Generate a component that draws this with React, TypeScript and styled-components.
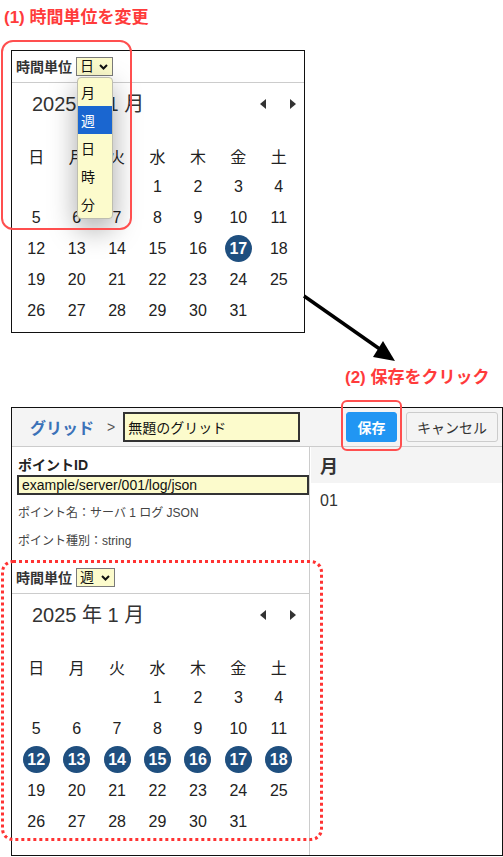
import React from "react";
import styled, { createGlobalStyle } from "styled-components";

const GlobalStyle = createGlobalStyle`
  html, body { margin: 0; padding: 0; background: #fff; }
  body { font-family: "Liberation Sans", "Noto Sans CJK JP", Arial, sans-serif; color: #222; }
  * { box-sizing: border-box; }
`;

const Page = styled.div`
  position: relative;
  width: 503px;
  height: 857px;
  overflow: hidden;
  display: flex;
  flex-direction: column;
`;

const StepLabel = styled.div<{ $ml: number; $mt: number }>`
  margin: ${(p) => p.$mt}px 0 0 ${(p) => p.$ml}px;
  font-size: 17px;
  font-weight: bold;
  color: #ff3b3b;
  line-height: 18px;
  height: 18px;
  white-space: nowrap;
`;

const TopCard = styled.div`
  margin: 23px 0 0 11px;
  width: 294px;
  height: 283px;
  border: 1px solid #111;
  background: #fff;
`;

const BottomCard = styled.div`
  margin: 20px 0 0 11px;
  width: 492px;
  height: 449px;
  border: 1px solid #111;
  display: flex;
  flex-direction: column;
  background: #fff;
`;

/* ---------- calendar ---------- */
const UnitHeader = styled.div`
  height: 32px;
  border-bottom: 1px solid #ccc;
  display: flex;
  align-items: center;
  padding-left: 4px;
`;

const UnitLabel = styled.span`
  font-size: 14px;
  font-weight: bold;
  color: #333;
  line-height: 18px;
`;

const SelectWrap = styled.div`
  position: relative;
  margin-left: 4px;
`;

const SelectBox = styled.div<{ $w: number }>`
  width: ${(p) => p.$w}px;
  height: 19px;
  border: 1px solid #7a7a7a;
  background: #fcfbcc;
  display: flex;
  align-items: center;
  justify-content: space-between;
  padding: 0 4px 0 3px;
  font-size: 14px;
  color: #111;
  line-height: 17px;
`;

const DropList = styled.div`
  position: absolute;
  top: 20px;
  left: 1px;
  width: 36px;
  background: #fcfbcc;
  border: 1px solid #bdbdb0;
  border-radius: 4px;
  box-shadow: 0 10px 28px rgba(0, 0, 0, 0.35);
  z-index: 5;
  overflow: hidden;
`;

const DropItem = styled.div<{ $active?: boolean }>`
  height: 28px;
  display: flex;
  align-items: center;
  padding-left: 3px;
  font-size: 14px;
  color: ${(p) => (p.$active ? "#fff" : "#111")};
  background: ${(p) => (p.$active ? "#1a66d0" : "transparent")};
`;

const TitleRow = styled.div`
  width: 291px;
  margin-top: 6px;
  height: 30px;
  display: flex;
  align-items: center;
  justify-content: space-between;
  padding: 0 7px 0 20px;
`;

const MonthTitle = styled.span`
  font-size: 20px;
  color: #333;
  line-height: 30px;
`;

const NavGroup = styled.div`
  display: flex;
  align-items: center;
  gap: 24px;
`;

const Grid = styled.div`
  width: 283px;
  margin: 21px 0 0 4px;
  display: grid;
  grid-template-columns: repeat(7, 1fr);
`;

const Cell = styled.div`
  height: 31px;
  display: flex;
  align-items: center;
  justify-content: center;
  font-size: 16px;
  color: #222;
`;

const Dot = styled.span`
  width: 27px;
  height: 27px;
  border-radius: 50%;
  background: #1f4f7f;
  color: #fff;
  font-weight: bold;
  display: flex;
  align-items: center;
  justify-content: center;
  font-size: 16px;
`;

const Chevron = () => (
  <svg width="9" height="6" viewBox="0 0 9 6">
    <polyline points="1,1 4.5,4.5 8,1" fill="none" stroke="#111" strokeWidth="2" />
  </svg>
);

const NavArrow = ({ dir }: { dir: "l" | "r" }) => (
  <svg width="6" height="10" viewBox="0 0 6 10">
    {dir === "l" ? <polygon points="6,0 6,10 0,5" fill="#333" /> : <polygon points="0,0 0,10 6,5" fill="#333" />}
  </svg>
);

const WEEK = ["日", "月", "火", "水", "木", "金", "土"];

function Calendar({
  unit,
  selectW,
  selected,
  open,
}: {
  unit: string;
  selectW: number;
  selected: number[];
  open?: boolean;
}) {
  const cells: (number | null)[] = [null, null, null];
  for (let d = 1; d <= 31; d++) cells.push(d);
  while (cells.length % 7) cells.push(null);
  return (
    <div>
      <UnitHeader>
        <UnitLabel>時間単位</UnitLabel>
        <SelectWrap>
          <SelectBox $w={selectW}>
            <span>{unit}</span>
            <Chevron />
          </SelectBox>
          {open && (
            <DropList>
              {["月", "週", "日", "時", "分"].map((u) => (
                <DropItem key={u} $active={u === "週"}>
                  {u}
                </DropItem>
              ))}
            </DropList>
          )}
        </SelectWrap>
      </UnitHeader>
      <TitleRow>
        <MonthTitle>2025 年 1 月</MonthTitle>
        <NavGroup>
          <NavArrow dir="l" />
          <NavArrow dir="r" />
        </NavGroup>
      </TitleRow>
      <Grid>
        {WEEK.map((w) => (
          <Cell key={w}>{w}</Cell>
        ))}
        {cells.map((d, i) => (
          <Cell key={i}>{d === null ? "" : selected.includes(d) ? <Dot>{d}</Dot> : d}</Cell>
        ))}
      </Grid>
    </div>
  );
}

/* ---------- bottom editor ---------- */
const TopBar = styled.div`
  height: 39px;
  border-bottom: 1px solid #ccc;
  background: #f4f4f4;
  display: flex;
  align-items: center;
  padding: 0 4px 0 18px;
`;

const Crumb = styled.span`
  font-size: 16px;
  font-weight: bold;
  color: #3b72b8;
`;

const CrumbSep = styled.span`
  font-size: 14px;
  color: #555;
  margin-left: 13px;
`;

const NameInput = styled.div`
  margin-left: 8px;
  width: 177px;
  height: 30px;
  border: 2px solid #333;
  background: #fcfbcc;
  font-size: 14px;
  display: flex;
  align-items: center;
  padding-left: 3px;
  color: #111;
`;

const Button = styled.div<{ $primary?: boolean; $w: number }>`
  width: ${(p) => p.$w}px;
  height: 30px;
  border-radius: 3px;
  display: flex;
  align-items: center;
  justify-content: center;
  font-size: 14px;
  font-weight: ${(p) => (p.$primary ? "bold" : "normal")};
  color: ${(p) => (p.$primary ? "#fff" : "#333")};
  background: ${(p) => (p.$primary ? "#2196f3" : "#f4f4f4")};
  border: 1px solid ${(p) => (p.$primary ? "#2196f3" : "#ccc")};
`;

const SaveButton = styled(Button)`
  margin-left: auto;
  margin-right: 9px;
`;

const Body = styled.div`
  flex: 1;
  display: flex;
`;

const LeftCol = styled.div`
  width: 298px;
  border-right: 1px solid #ccc;
`;

const RightCol = styled.div`
  flex: 1;
  padding-left: 1px;
`;

const FieldLabel = styled.div`
  margin: 9px 0 0 6px;
  font-size: 14px;
  font-weight: bold;
  line-height: 18px;
  color: #222;
`;

const IdInput = styled.div`
  margin: 1px 0 0 5px;
  width: 292px;
  height: 20px;
  border: 2px solid #333;
  background: #fcfbcc;
  font-size: 14px;
  line-height: 16px;
  padding-left: 3px;
  color: #111;
`;

const Info = styled.div<{ $mt: number }>`
  margin: ${(p) => p.$mt}px 0 0 6px;
  font-size: 12px;
  line-height: 16px;
  color: #444;
`;

const CalSection = styled.div`
  margin-top: 13px;
`;

const ColHead = styled.div`
  height: 36px;
  background: #f4f4f4;
  display: flex;
  align-items: center;
  padding-left: 9px;
  font-size: 18px;
  font-weight: bold;
  color: #333;
`;

const ColValue = styled.div`
  margin: 9px 0 0 9px;
  font-size: 16px;
  line-height: 18px;
  color: #333;
`;

/* ---------- annotations ---------- */
const Mark = styled.div<{ $x: number; $y: number; $w: number; $h: number; $r: number; $dotted?: boolean }>`
  position: absolute;
  left: ${(p) => p.$x}px;
  top: ${(p) => p.$y}px;
  width: ${(p) => p.$w}px;
  height: ${(p) => p.$h}px;
  border-radius: ${(p) => p.$r}px;
  border: ${(p) => (p.$dotted ? "3px dotted #ff3333" : "2px solid #ff4f4f")};
  pointer-events: none;
  z-index: 10;
`;

const ArrowSvg = styled.svg`
  position: absolute;
  left: 300px;
  top: 285px;
  z-index: 10;
`;

export default function App() {
  return (
    <>
      <GlobalStyle />
      <Page>
        <StepLabel $ml={4} $mt={9}>(1) 時間単位を変更</StepLabel>
        <TopCard>
          <Calendar unit="日" selectW={37} selected={[17]} open />
        </TopCard>
        <StepLabel $ml={345} $mt={36}>(2) 保存をクリック</StepLabel>
        <BottomCard>
          <TopBar>
            <Crumb>グリッド</Crumb>
            <CrumbSep>&gt;</CrumbSep>
            <NameInput>無題のグリッド</NameInput>
            <SaveButton $primary $w={51}>保存</SaveButton>
            <Button $w={92}>キャンセル</Button>
          </TopBar>
          <Body>
            <LeftCol>
              <FieldLabel>ポイントID</FieldLabel>
              <IdInput>example/server/001/log/json</IdInput>
              <Info $mt={10}>ポイント名：サーバ 1 ログ JSON</Info>
              <Info $mt={12}>ポイント種別：string</Info>
              <CalSection>
                <Calendar unit="週" selectW={39} selected={[12, 13, 14, 15, 16, 17, 18]} />
              </CalSection>
            </LeftCol>
            <RightCol>
              <ColHead>月</ColHead>
              <ColValue>01</ColValue>
            </RightCol>
          </Body>
        </BottomCard>

        <Mark $x={1} $y={40} $w={131} $h={190} $r={12} />
        <Mark $x={341} $y={400} $w={61} $h={51} $r={6} />
        <Mark $x={1} $y={560} $w={322} $h={281} $r={12} $dotted />
        <ArrowSvg width="100" height="80" viewBox="0 0 100 80">
          <line x1="4" y1="11" x2="84" y2="67" stroke="#000" strokeWidth="3.5" />
          <polygon points="95,76 83,56 73,72" fill="#000" />
        </ArrowSvg>
      </Page>
    </>
  );
}
